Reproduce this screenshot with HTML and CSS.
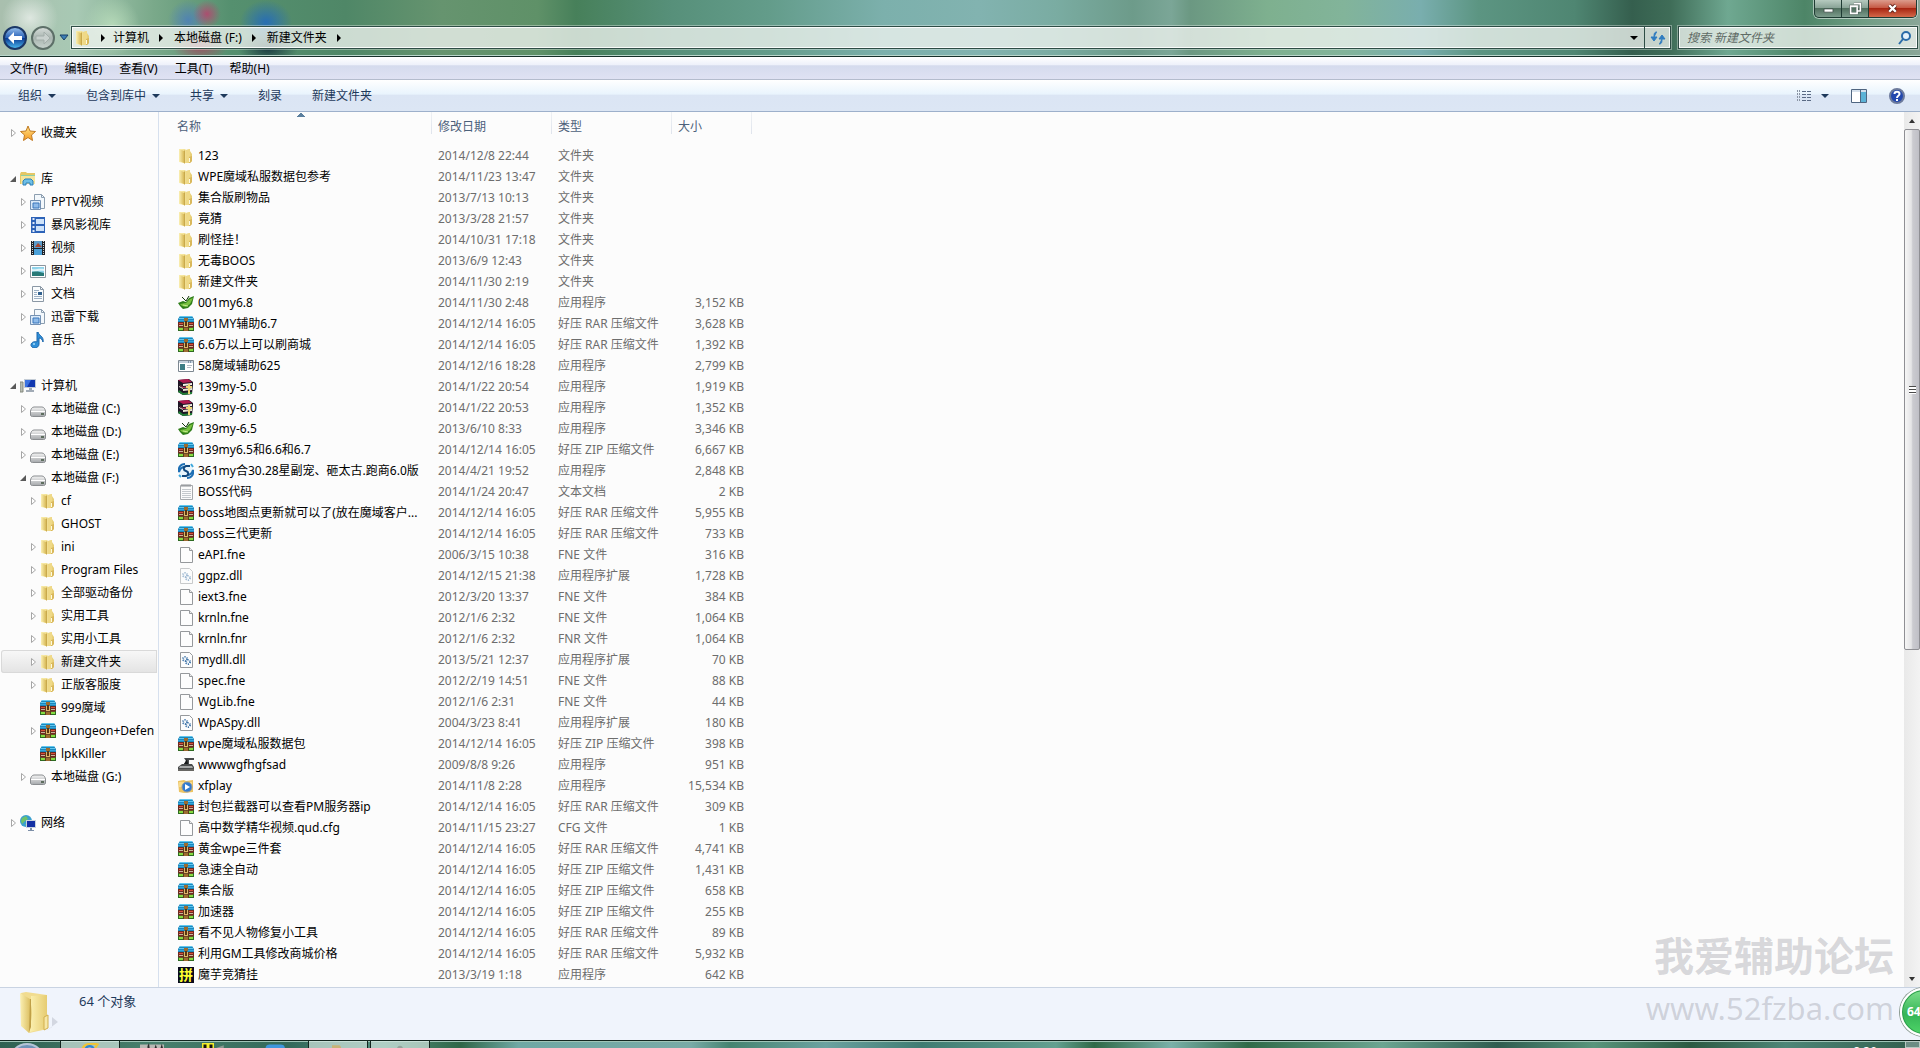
FILE: index.html
```html
<!DOCTYPE html>
<html lang="zh-CN">
<head>
    <meta charset="UTF-8">
    <meta name="viewport" content="width=device-width, initial-scale=1.0">
    <title>新建文件夹</title>
    <link rel="stylesheet" href="styles.css">
</head>
<body>
    <svg class="sprite" aria-hidden="true">
        <defs>
            <linearGradient id="gFlap" x1="0" x2="1" y1="0" y2="0"><stop offset="0" stop-color="#fbf0b4"/><stop offset="1" stop-color="#d8b957"/></linearGradient>
            <linearGradient id="gFront" x1="0" x2="1" y1="0" y2="0"><stop offset="0" stop-color="#fbf0b0"/><stop offset="1" stop-color="#e6cc72"/></linearGradient>
            <linearGradient id="gBlue" x1="0" x2="0" y1="0" y2="1"><stop offset="0" stop-color="#9cc4ee"/><stop offset=".48" stop-color="#2a62b8"/><stop offset=".52" stop-color="#0b3c94"/><stop offset="1" stop-color="#4fc0f4"/></linearGradient>
            <linearGradient id="gGrey" x1="0" x2="0" y1="0" y2="1"><stop offset="0" stop-color="#d8dedb"/><stop offset=".5" stop-color="#a9b5b0"/><stop offset="1" stop-color="#c9d4cf"/></linearGradient>
            <linearGradient id="gDrive" x1="0" x2="0" y1="0" y2="1"><stop offset="0" stop-color="#f4f4f4"/><stop offset="1" stop-color="#a5a8ab"/></linearGradient>
            <linearGradient id="gStar" x1="0" x2="0" y1="0" y2="1"><stop offset="0" stop-color="#ffe48a"/><stop offset="1" stop-color="#f59a23"/></linearGradient>
        </defs>
        <symbol id="i-folder" viewBox="0 0 16 16">
            <path d="M1 1h6l1 1 4-1v2l2 3v7l-2 2H6l-5-1z" fill="url(#gFront)"/>
            <path d="M1 1l5 2v12l-5-2z" fill="url(#gFlap)"/>
            <path d="M6 3l1-1v13l-1 1z" fill="#c9a94c"/>
            <path d="M8 2l4-1v13l-4 1z" fill="#efd987"/>
            <path d="M11 9l3-1v5l-2 2h-1z" fill="#d9b85c"/>
            <path d="M11.500 10v4" stroke="#fffbe0"/>
        </symbol>
        <symbol id="i-rar" viewBox="0 0 16 16">
            <path d="M2 0h12l2 3v3H0V3z" fill="#1c87bd"/>
            <path d="M2 .500h12M1 2.500h14" stroke="#5fc8f0"/>
            <path d="M0 4h16v1H0z" fill="#35a6da"/>
            <path d="M0 6h16v5H0z" fill="#6f2a20"/>
            <path d="M1 7.500h14" stroke="#d8523c"/>
            <path d="M1 9.500h14" stroke="#c9b59c"/>
            <path d="M0 11h16v4H0z" fill="#2e6a22"/>
            <path d="M1 11.500h14" stroke="#6d4a28"/>
            <path d="M1 13h14" stroke="#86dc42" stroke-width="2"/>
            <path d="M5.500 6v9M10.500 6v9" stroke="#5b3a1c"/>
            <path d="M6 2h4v3H6zM6 12h4v3H6z" fill="#9c6d30"/>
            <path d="M6 6h4v5H6z" fill="#e0b56a"/>
            <path d="M8 5v5" stroke="#5a3512" stroke-width="2"/>
        </symbol>
        <symbol id="i-books" viewBox="0 0 16 16">
            <path d="M0 1l11-1 4 3v3l-1 9-9 1-5-3z" fill="#1d1524"/>
            <path d="M0 1l10-1 4 3-9 1z" fill="#b0184e"/>
            <path d="M5 5l9-1v2l-9 1z" fill="#f4eee4"/>
            <path d="M1 5l4 3 9-1v1L5 9z" fill="#d9325f"/>
            <path d="M5 10l9-1v2l-9 1zM1 7l4 2v1L1 8z" fill="#e9e2d2"/>
            <path d="M1 11l4 3 9-1v2l-9 1-5-3z" fill="#1f7d35"/>
            <path d="M11 5v10M8 8h6" stroke="#f1d878" stroke-width="2"/>
        </symbol>
        <symbol id="i-leaf" viewBox="0 0 16 16">
            <path d="M0 8l5-2 3 1 3-4 5-2-2 8-4 4-5 1-3-3z" fill="#2f7d1a"/>
            <path d="M2 9l6-1 4-4 3-1-3 6-4 3-4-1z" fill="#79c040"/>
            <path d="M4 2l4 4 3-5" stroke="#16380c" fill="none"/>
            <path d="M5 10l5 1" stroke="#c3ec8e"/>
        </symbol>
        <symbol id="i-app" viewBox="0 0 16 16">
            <path d="M.500 2.500h15v11H.500z" fill="#fff" stroke="#7d8791"/>
            <path d="M1 3h14v2H1z" fill="#c3cfda"/>
            <path d="M10 4h1M12 4h1" stroke="#3b5878"/>
            <path d="M2 6h5v6H2z" fill="#3d7d84"/>
            <path d="M9 7.500h5M9 9.500h4" stroke="#b3bcc4"/>
        </symbol>
        <symbol id="i-swirl" viewBox="0 0 16 16">
            <circle cx="8" cy="8" r="7" fill="#e8f5fc"/>
            <path d="M7 1C2 1 0 5 1 9c1-4 3-5 6-5M9 15c5 0 7-4 6-8-1 4-3 5-6 5" fill="none" stroke="#1e6fb4" stroke-width="2"/>
            <path d="M12 3H8C5 4 5 7 8 8s3 4 0 5H4" fill="none" stroke="#12497f" stroke-width="2"/>
            <path d="M13 1l2 3M1 12l2 2" stroke="#3fa8dc" stroke-width="2"/>
        </symbol>
        <symbol id="i-text" viewBox="0 0 16 16">
            <path d="M2.500 1.500h12v14h-12z" fill="#fbfbfb" stroke="#a6a9ac"/>
            <path d="M4 0v3M6 0v3M8 0v3M10 0v3M12 0v3" stroke="#8d9094"/>
            <path d="M4 5.500h9M4 7.500h9M4 9.500h9M4 11.500h9M4 13.500h9" stroke="#c5c9cd"/>
        </symbol>
        <symbol id="i-file" viewBox="0 0 16 16">
            <path d="M2.500.500h9l3 3v12h-12z" fill="#fdfdfd" stroke="#96999c"/>
            <path d="M11.500.500v3h3" fill="#eee" stroke="#96999c"/>
        </symbol>
        <symbol id="i-dll" viewBox="0 0 16 16">
            <path d="M2.500.500h9l3 3v12h-12z" fill="#fdfdfd" stroke="#96999c"/>
            <circle cx="7" cy="7" r="2" fill="#fff" stroke="#3d73a8" stroke-width="2" stroke-dasharray="1 1"/>
            <circle cx="10" cy="10" r="2" fill="#fff" stroke="#3d73a8" stroke-width="2" stroke-dasharray="1 1"/>
        </symbol>
        <symbol id="i-spy" viewBox="0 0 16 16">
            <path d="M6 1h10v2h-5v4h3l2 3v4H0v-4l4-3h2l2-3z" fill="#4a4c4d"/>
            <path d="M2 9h12l1 2H1z" fill="#a6a8a8"/>
            <path d="M0 13h16" stroke="#85817a"/>
            <path d="M9 2L6 7h4z" fill="#17191a"/>
        </symbol>
        <symbol id="i-xf" viewBox="0 0 16 16">
            <path d="M0 3l6-1 2 1 7-1v12l-9 1-5-1z" fill="#ecc463"/>
            <path d="M1 4h13v5H1z" fill="#f7db8c"/>
            <circle cx="9" cy="9" r="5" fill="#2f7ad0" stroke="#8a96a4"/>
            <path d="M7 6l5 3-5 3z" fill="#fff"/>
        </symbol>
        <symbol id="i-pin" viewBox="0 0 16 16">
            <path d="M0 0h16v16H0z" fill="#0a0a1c"/>
            <text x="8" y="13" class="pin-text">拼</text>
        </symbol>
        <symbol id="i-star" viewBox="0 0 16 16">
            <path d="M8 1l2 5 5.500.500-4 3.500 1 5.500L8 12.500 3.500 15.500l1-5.500-4-3.500L6 6z" fill="url(#gStar)" stroke="#c07a24" stroke-linejoin="round"/>
        </symbol>
        <symbol id="i-lib" viewBox="0 0 16 16">
            <path d="M0 3l1-2h5l1 1h8v11H0z" fill="#e5c765"/>
            <path d="M1 4h14v2H1z" fill="#8fd0a4"/>
            <path d="M1 5h14v8H1z" fill="#f6e49a"/>
            <path d="M3 14v-4l2-2h6l2 2v4h-3v-2H6v2z" fill="#6fbfe6" stroke="#2d7fb8"/>
        </symbol>
        <symbol id="i-pages" viewBox="0 0 16 16">
            <path d="M4.500.500h7l3 3v11h-10z" fill="#f3f8fc" stroke="#8c9eb0"/>
            <path d="M11.500.500v3h3" fill="none" stroke="#8c9eb0"/>
            <path d="M.500 6.500h10v9H.500z" fill="#dcebf9" stroke="#7391b4"/>
            <path d="M3 9h6v5H3z" fill="#8fbbe9" stroke="#3b76bb"/>
        </symbol>
        <symbol id="i-film" viewBox="0 0 16 16">
            <path d="M1 0h14v16H1z" fill="#2d63b8"/>
            <path d="M6 2h8v5H6zM6 9h8v5H6z" fill="#cfe3fa"/>
            <path d="M3.500 1v14" stroke="#dfeafa" stroke-width="2" stroke-dasharray="2 2"/>
        </symbol>
        <symbol id="i-video" viewBox="0 0 16 16">
            <path d="M1 1h14v14H1z" fill="#1e2228"/>
            <path d="M4 1h8v7H4z" fill="#5c9bc9"/>
            <path d="M4 9h8v6H4z" fill="#4aa0d8"/>
            <path d="M5 7l3-4 4 4z" fill="#a9442f"/>
            <path d="M2.500 1v14M13.500 1v14" stroke="#cfd4d8" stroke-dasharray="1 1"/>
        </symbol>
        <symbol id="i-pic" viewBox="0 0 16 16">
            <path d="M.500 2.500h15v12H.500z" fill="#fff" stroke="#8c959d"/>
            <path d="M2 4h12v9H2z" fill="#8fd3ea"/>
            <path d="M2 9c4-2 8 0 12 1v3H2z" fill="#287a78"/>
            <path d="M2 6c4 1 6-1 12 0v2C9 7 6 9 2 8z" fill="#e1f5fa"/>
        </symbol>
        <symbol id="i-doc" viewBox="0 0 16 16">
            <path d="M2.500.500h8l3 3v12h-11z" fill="#fafcfd" stroke="#8b98a5"/>
            <path d="M10.500.500v3h3" fill="none" stroke="#8b98a5"/>
            <path d="M4 4.500h5M4 6.500h3M4 8.500h3M4 10.500h8M4 12.500h8" stroke="#9db0c4"/>
            <path d="M8 6h4v3H8z" fill="#31618f"/>
        </symbol>
        <symbol id="i-music" viewBox="0 0 16 16">
            <path d="M8 0c1 4 6 4 5 10-1-3-2-4-4-4v6c0 5-8 5-8 1 0-3 4-4 6-3V0z" fill="#2f8fd8" stroke="#1a66ac"/>
            <circle cx="4" cy="12" r="1" fill="#a6dcfa"/>
        </symbol>
        <symbol id="i-pc" viewBox="0 0 16 16">
            <path d="M0 4h3v10H0z" fill="#b7bcb2" stroke="#84897f"/>
            <path d="M4 1h12v9H4z" fill="#c4ccd6"/>
            <path d="M5 2h10v7H5z" fill="#1238b0"/>
            <path d="M5 2h6l-4 7H5z" fill="#3a72e0"/>
            <path d="M9 10h3v2h2v2H6v-2h3z" fill="#a1abb6"/>
        </symbol>
        <symbol id="i-drive" viewBox="0 0 16 16">
            <path d="M4 6h8c2 0 3 2 3.500 4v4c0 1-1 1.500-2 1.500h-11c-1 0-2-.500-2-1.500v-4C1 8 2 6 4 6z" fill="url(#gDrive)" stroke="#8a8d90"/>
            <path d="M1 10.500h14" stroke="#fff"/>
            <path d="M11 12h3v2h-3z" fill="#5d6d5e"/>
        </symbol>
        <symbol id="i-net" viewBox="0 0 16 16">
            <circle cx="6" cy="6" r="6" fill="#3aa0cf"/>
            <path d="M2 3l4-2 2 3-3 2-3 3-1-3zM5 9l3 0-1 3z" fill="#6fc26a"/>
            <path d="M6 5h10v8H6z" fill="#c8d2de"/>
            <path d="M7 6h8v6H7z" fill="#122fa4"/>
            <path d="M10 13h2v2h2v1H8v-1h2z" fill="#7d8fa8"/>
        </symbol>
        <symbol id="t-closed" viewBox="0 0 10 10"><path d="M1.500 1.500v7l4-3.500z" fill="#fff" stroke="#a6a6a6"/></symbol>
        <symbol id="t-open" viewBox="0 0 10 10"><path d="M6 2v6H0z" fill="#595959"/></symbol>
        <symbol id="t-right" viewBox="0 0 10 10"><path d="M3 1v8l4-4z" fill="#000"/></symbol>
        <symbol id="t-down" viewBox="0 0 8 8"><path d="M0 2h8L4 6z" fill="currentColor"/></symbol>
    </svg>

    <header class="titlebar">
        <div class="travel">
            <button class="round" aria-label="后退"><svg viewBox="0 0 24 24"><circle cx="12" cy="12" r="11" fill="url(#gBlue)" stroke="#1b3766" stroke-width="2"/><path d="M11 6l-6 6 6 6v-4h8v-4h-8z" fill="#fff"/></svg></button>
            <button class="round" aria-label="前进"><svg viewBox="0 0 24 24"><circle cx="12" cy="12" r="11" fill="url(#gGrey)" stroke="#5d6f68" stroke-width="2"/><path d="M13 6l6 6-6 6v-4H5v-4h8z" fill="#c9d1ce" stroke="#a3aeaa"/></svg></button>
            <button class="recent" aria-label="最近页面"><svg viewBox="0 0 10 8"><path d="M1 1h8L5 6z" fill="#3d7fb6" stroke="#173f68"/></svg></button>
        </div>
        <nav class="address" aria-label="地址">
            <svg class="icon"><use href="#i-folder"/></svg>
            <svg class="crumb-arrow"><use href="#t-right"/></svg>
            <a href="#">计算机</a>
            <svg class="crumb-arrow"><use href="#t-right"/></svg>
            <a href="#">本地磁盘 (F:)</a>
            <svg class="crumb-arrow"><use href="#t-right"/></svg>
            <a href="#">新建文件夹</a>
            <svg class="crumb-arrow"><use href="#t-right"/></svg>
            <button class="history" aria-label="历史"><svg class="caret"><use href="#t-down"/></svg></button>
            <button class="refresh" aria-label="刷新"><svg viewBox="0 0 16 16"><path d="M7 2C4 2 4 4 4 8M1 7l3 4 3-4zM9 14c3 0 3-2 3-6M9 9l3-4 3 4z" fill="#2f7cc0" stroke="#2f7cc0"/></svg></button>
        </nav>
        <div class="search">
            <input type="search" aria-label="搜索" placeholder="搜索 新建文件夹">
            <svg viewBox="0 0 16 16"><circle cx="9" cy="6" r="4" fill="#e5f2fb" stroke="#2b6ca8" stroke-width="2"/><path d="M6 9l-4 5" stroke="#2b6ca8" stroke-width="2"/></svg>
        </div>
        <div class="caption">
            <button aria-label="最小化"><svg viewBox="0 0 16 16"><path d="M2.500 8.500h11v4h-11z" fill="#fff" stroke="#41504b"/></svg></button>
            <button aria-label="还原"><svg viewBox="0 0 16 16"><path d="M6 2h8v9h-3M2 5h8v9H2z" fill="none" stroke="#41504b" stroke-width="3"/><path d="M6 2h8v9h-3M2 5h8v9H2z" fill="none" stroke="#fff" stroke-width="2"/></svg></button>
            <button class="close" aria-label="关闭"><svg viewBox="0 0 16 16"><path d="M4 4l8 8M12 4l-8 8" stroke="#5e2018" stroke-width="5"/><path d="M4 4l8 8M12 4l-8 8" stroke="#fff" stroke-width="3"/></svg></button>
        </div>
    </header>

    <nav class="menubar" aria-label="菜单">
        <button>文件(F)</button>
        <button>编辑(E)</button>
        <button>查看(V)</button>
        <button>工具(T)</button>
        <button>帮助(H)</button>
    </nav>

    <div class="toolbar">
        <button>组织 <svg class="caret"><use href="#t-down"/></svg></button>
        <button>包含到库中 <svg class="caret"><use href="#t-down"/></svg></button>
        <button>共享 <svg class="caret"><use href="#t-down"/></svg></button>
        <button>刻录</button>
        <button>新建文件夹</button>
        <div class="views">
            <button aria-label="更改视图">
                <svg class="icon" viewBox="0 0 16 16"><path d="M1.500 2v12M3.500 2v12" stroke="#8a94a3" stroke-dasharray="2 1"/><path d="M6 3.500h9M6 6.500h9M6 9.500h9M6 12.500h9" stroke="#5a6a84" stroke-dasharray="4 1"/></svg>
                <svg class="caret"><use href="#t-down"/></svg>
            </button>
            <button aria-label="显示预览窗格"><svg class="icon" viewBox="0 0 16 16"><path d="M.500 1.500h15v13H.500z" fill="#fff" stroke="#4f6580"/><path d="M1 2h14v2H1z" fill="#d5e0ec"/><path d="M10 4h5v10h-5z" fill="#5bb2d6"/><path d="M9.500 2v12" stroke="#4f6580"/></svg></button>
            <button aria-label="获取帮助"><svg class="icon" viewBox="0 0 16 16"><circle cx="8" cy="8" r="7" fill="#2348ae" stroke="#6c7a9c" stroke-width="2"/><path d="M5.500 6c0-3 5-3 5 0 0 2-2.500 1.500-2.500 4M8 11v2" fill="none" stroke="#fff" stroke-width="2"/></svg></button>
        </div>
    </div>

    <main class="panes">
        <nav class="tree" aria-label="导航窗格">
            <ul>
                <li><a href="#"><svg class="twisty"><use href="#t-closed"/></svg><svg class="icon"><use href="#i-star"/></svg>收藏夹</a></li>
            </ul>
            <ul>
                <li><a href="#"><svg class="twisty"><use href="#t-open"/></svg><svg class="icon"><use href="#i-lib"/></svg>库</a></li>
                <li class="sub"><a href="#"><svg class="twisty"><use href="#t-closed"/></svg><svg class="icon"><use href="#i-pages"/></svg>PPTV视频</a></li>
                <li class="sub"><a href="#"><svg class="twisty"><use href="#t-closed"/></svg><svg class="icon"><use href="#i-film"/></svg>暴风影视库</a></li>
                <li class="sub"><a href="#"><svg class="twisty"><use href="#t-closed"/></svg><svg class="icon"><use href="#i-video"/></svg>视频</a></li>
                <li class="sub"><a href="#"><svg class="twisty"><use href="#t-closed"/></svg><svg class="icon"><use href="#i-pic"/></svg>图片</a></li>
                <li class="sub"><a href="#"><svg class="twisty"><use href="#t-closed"/></svg><svg class="icon"><use href="#i-doc"/></svg>文档</a></li>
                <li class="sub"><a href="#"><svg class="twisty"><use href="#t-closed"/></svg><svg class="icon"><use href="#i-pages"/></svg>迅雷下载</a></li>
                <li class="sub"><a href="#"><svg class="twisty"><use href="#t-closed"/></svg><svg class="icon"><use href="#i-music"/></svg>音乐</a></li>
            </ul>
            <ul>
                <li><a href="#"><svg class="twisty"><use href="#t-open"/></svg><svg class="icon"><use href="#i-pc"/></svg>计算机</a></li>
                <li class="sub"><a href="#"><svg class="twisty"><use href="#t-closed"/></svg><svg class="icon"><use href="#i-drive"/></svg>本地磁盘 (C:)</a></li>
                <li class="sub"><a href="#"><svg class="twisty"><use href="#t-closed"/></svg><svg class="icon"><use href="#i-drive"/></svg>本地磁盘 (D:)</a></li>
                <li class="sub"><a href="#"><svg class="twisty"><use href="#t-closed"/></svg><svg class="icon"><use href="#i-drive"/></svg>本地磁盘 (E:)</a></li>
                <li class="sub"><a href="#"><svg class="twisty"><use href="#t-open"/></svg><svg class="icon"><use href="#i-drive"/></svg>本地磁盘 (F:)</a></li>
                <li class="leaf"><a href="#"><svg class="twisty"><use href="#t-closed"/></svg><svg class="icon"><use href="#i-folder"/></svg>cf</a></li>
                <li class="leaf"><a href="#"><svg class="twisty"></svg><svg class="icon"><use href="#i-folder"/></svg>GHOST</a></li>
                <li class="leaf"><a href="#"><svg class="twisty"><use href="#t-closed"/></svg><svg class="icon"><use href="#i-folder"/></svg>ini</a></li>
                <li class="leaf"><a href="#"><svg class="twisty"><use href="#t-closed"/></svg><svg class="icon"><use href="#i-folder"/></svg>Program Files</a></li>
                <li class="leaf"><a href="#"><svg class="twisty"><use href="#t-closed"/></svg><svg class="icon"><use href="#i-folder"/></svg>全部驱动备份</a></li>
                <li class="leaf"><a href="#"><svg class="twisty"><use href="#t-closed"/></svg><svg class="icon"><use href="#i-folder"/></svg>实用工具</a></li>
                <li class="leaf"><a href="#"><svg class="twisty"><use href="#t-closed"/></svg><svg class="icon"><use href="#i-folder"/></svg>实用小工具</a></li>
                <li class="leaf"><a href="#" class="selected"><svg class="twisty"><use href="#t-closed"/></svg><svg class="icon"><use href="#i-folder"/></svg>新建文件夹</a></li>
                <li class="leaf"><a href="#"><svg class="twisty"><use href="#t-closed"/></svg><svg class="icon"><use href="#i-folder"/></svg>正版客服度</a></li>
                <li class="leaf"><a href="#"><svg class="twisty"></svg><svg class="icon"><use href="#i-rar"/></svg>999魔域</a></li>
                <li class="leaf"><a href="#"><svg class="twisty"><use href="#t-closed"/></svg><svg class="icon"><use href="#i-rar"/></svg>Dungeon+Defen</a></li>
                <li class="leaf"><a href="#"><svg class="twisty"></svg><svg class="icon"><use href="#i-rar"/></svg>lpkKiller</a></li>
                <li class="sub"><a href="#"><svg class="twisty"><use href="#t-closed"/></svg><svg class="icon"><use href="#i-drive"/></svg>本地磁盘 (G:)</a></li>
            </ul>
            <ul>
                <li><a href="#"><svg class="twisty"><use href="#t-closed"/></svg><svg class="icon"><use href="#i-net"/></svg>网络</a></li>
            </ul>
        </nav>

        <section class="files">
            <table>
                <colgroup><col class="c-name"><col class="c-date"><col class="c-type"><col class="c-size"></colgroup>
                <thead>
                    <tr><th class="sorted">名称</th><th>修改日期</th><th>类型</th><th>大小</th></tr>
                </thead>
                <tbody>
                    <tr><td><svg class="icon"><use href="#i-folder"/></svg>123</td><td>2014/12/8 22:44</td><td>文件夹</td><td></td></tr>
                    <tr><td><svg class="icon"><use href="#i-folder"/></svg>WPE魔域私服数据包参考</td><td>2014/11/23 13:47</td><td>文件夹</td><td></td></tr>
                    <tr><td><svg class="icon"><use href="#i-folder"/></svg>集合版刷物品</td><td>2013/7/13 10:13</td><td>文件夹</td><td></td></tr>
                    <tr><td><svg class="icon"><use href="#i-folder"/></svg>竟猜</td><td>2013/3/28 21:57</td><td>文件夹</td><td></td></tr>
                    <tr><td><svg class="icon"><use href="#i-folder"/></svg>刷怪挂！</td><td>2014/10/31 17:18</td><td>文件夹</td><td></td></tr>
                    <tr><td><svg class="icon"><use href="#i-folder"/></svg>无毒BOOS</td><td>2013/6/9 12:43</td><td>文件夹</td><td></td></tr>
                    <tr><td><svg class="icon"><use href="#i-folder"/></svg>新建文件夹</td><td>2014/11/30 2:19</td><td>文件夹</td><td></td></tr>
                    <tr><td><svg class="icon"><use href="#i-leaf"/></svg>001my6.8</td><td>2014/11/30 2:48</td><td>应用程序</td><td>3,152 KB</td></tr>
                    <tr><td><svg class="icon"><use href="#i-rar"/></svg>001MY辅助6.7</td><td>2014/12/14 16:05</td><td>好压 RAR 压缩文件</td><td>3,628 KB</td></tr>
                    <tr><td><svg class="icon"><use href="#i-rar"/></svg>6.6万以上可以刷商城</td><td>2014/12/14 16:05</td><td>好压 RAR 压缩文件</td><td>1,392 KB</td></tr>
                    <tr><td><svg class="icon"><use href="#i-app"/></svg>58魔域辅助625</td><td>2014/12/16 18:28</td><td>应用程序</td><td>2,799 KB</td></tr>
                    <tr><td><svg class="icon"><use href="#i-books"/></svg>139my-5.0</td><td>2014/1/22 20:54</td><td>应用程序</td><td>1,919 KB</td></tr>
                    <tr><td><svg class="icon"><use href="#i-books"/></svg>139my-6.0</td><td>2014/1/22 20:53</td><td>应用程序</td><td>1,352 KB</td></tr>
                    <tr><td><svg class="icon"><use href="#i-leaf"/></svg>139my-6.5</td><td>2013/6/10 8:33</td><td>应用程序</td><td>3,346 KB</td></tr>
                    <tr><td><svg class="icon"><use href="#i-rar"/></svg>139my6.5和6.6和6.7</td><td>2014/12/14 16:05</td><td>好压 ZIP 压缩文件</td><td>6,667 KB</td></tr>
                    <tr><td><svg class="icon"><use href="#i-swirl"/></svg>361my合30.28星副宠、砸太古.跑商6.0版</td><td>2014/4/21 19:52</td><td>应用程序</td><td>2,848 KB</td></tr>
                    <tr><td><svg class="icon"><use href="#i-text"/></svg>BOSS代码</td><td>2014/1/24 20:47</td><td>文本文档</td><td>2 KB</td></tr>
                    <tr><td><svg class="icon"><use href="#i-rar"/></svg>boss地图点更新就可以了(放在魔域客户...</td><td>2014/12/14 16:05</td><td>好压 RAR 压缩文件</td><td>5,955 KB</td></tr>
                    <tr><td><svg class="icon"><use href="#i-rar"/></svg>boss三代更新</td><td>2014/12/14 16:05</td><td>好压 RAR 压缩文件</td><td>733 KB</td></tr>
                    <tr><td><svg class="icon"><use href="#i-file"/></svg>eAPI.fne</td><td>2006/3/15 10:38</td><td>FNE 文件</td><td>316 KB</td></tr>
                    <tr><td><svg class="icon hidden-file"><use href="#i-dll"/></svg>ggpz.dll</td><td>2014/12/15 21:38</td><td>应用程序扩展</td><td>1,728 KB</td></tr>
                    <tr><td><svg class="icon"><use href="#i-file"/></svg>iext3.fne</td><td>2012/3/20 13:37</td><td>FNE 文件</td><td>384 KB</td></tr>
                    <tr><td><svg class="icon"><use href="#i-file"/></svg>krnln.fne</td><td>2012/1/6 2:32</td><td>FNE 文件</td><td>1,064 KB</td></tr>
                    <tr><td><svg class="icon"><use href="#i-file"/></svg>krnln.fnr</td><td>2012/1/6 2:32</td><td>FNR 文件</td><td>1,064 KB</td></tr>
                    <tr><td><svg class="icon"><use href="#i-dll"/></svg>mydll.dll</td><td>2013/5/21 12:37</td><td>应用程序扩展</td><td>70 KB</td></tr>
                    <tr><td><svg class="icon"><use href="#i-file"/></svg>spec.fne</td><td>2012/2/19 14:51</td><td>FNE 文件</td><td>88 KB</td></tr>
                    <tr><td><svg class="icon"><use href="#i-file"/></svg>WgLib.fne</td><td>2012/1/6 2:31</td><td>FNE 文件</td><td>44 KB</td></tr>
                    <tr><td><svg class="icon"><use href="#i-dll"/></svg>WpASpy.dll</td><td>2004/3/23 8:41</td><td>应用程序扩展</td><td>180 KB</td></tr>
                    <tr><td><svg class="icon"><use href="#i-rar"/></svg>wpe魔域私服数据包</td><td>2014/12/14 16:05</td><td>好压 ZIP 压缩文件</td><td>398 KB</td></tr>
                    <tr><td><svg class="icon"><use href="#i-spy"/></svg>wwwwgfhgfsad</td><td>2009/8/8 9:26</td><td>应用程序</td><td>951 KB</td></tr>
                    <tr><td><svg class="icon"><use href="#i-xf"/></svg>xfplay</td><td>2014/11/8 2:28</td><td>应用程序</td><td>15,534 KB</td></tr>
                    <tr><td><svg class="icon"><use href="#i-rar"/></svg>封包拦截器可以查看PM服务器ip</td><td>2014/12/14 16:05</td><td>好压 RAR 压缩文件</td><td>309 KB</td></tr>
                    <tr><td><svg class="icon"><use href="#i-file"/></svg>高中数学精华视频.qud.cfg</td><td>2014/11/15 23:27</td><td>CFG 文件</td><td>1 KB</td></tr>
                    <tr><td><svg class="icon"><use href="#i-rar"/></svg>黄金wpe三件套</td><td>2014/12/14 16:05</td><td>好压 RAR 压缩文件</td><td>4,741 KB</td></tr>
                    <tr><td><svg class="icon"><use href="#i-rar"/></svg>急速全自动</td><td>2014/12/14 16:05</td><td>好压 ZIP 压缩文件</td><td>1,431 KB</td></tr>
                    <tr><td><svg class="icon"><use href="#i-rar"/></svg>集合版</td><td>2014/12/14 16:05</td><td>好压 ZIP 压缩文件</td><td>658 KB</td></tr>
                    <tr><td><svg class="icon"><use href="#i-rar"/></svg>加速器</td><td>2014/12/14 16:05</td><td>好压 ZIP 压缩文件</td><td>255 KB</td></tr>
                    <tr><td><svg class="icon"><use href="#i-rar"/></svg>看不见人物修复小工具</td><td>2014/12/14 16:05</td><td>好压 RAR 压缩文件</td><td>89 KB</td></tr>
                    <tr><td><svg class="icon"><use href="#i-rar"/></svg>利用GM工具修改商城价格</td><td>2014/12/14 16:05</td><td>好压 RAR 压缩文件</td><td>5,932 KB</td></tr>
                    <tr><td><svg class="icon"><use href="#i-pin"/></svg>魔芋竞猜挂</td><td>2013/3/19 1:18</td><td>应用程序</td><td>642 KB</td></tr>
                </tbody>
            </table>
        </section>

        <div class="scrollbar">
            <button aria-label="向上滚动"><svg viewBox="0 0 8 8"><path d="M1 6h6L4 2z" fill="#333"/></svg></button>
            <div class="track"><div class="thumb"><span class="grip"></span></div></div>
            <button aria-label="向下滚动"><svg viewBox="0 0 8 8"><path d="M1 2h6L4 6z" fill="#333"/></svg></button>
        </div>
    </main>

    <footer class="details">
        <svg viewBox="0 0 40 44">
            <path d="M26 40l12-9-6-5v10z" fill="#d3d7e1"/>
            <path d="M1 2l5-1 21 3v33l-4 2-14 3z" fill="#f1dc90"/>
            <path d="M11 5l16-1v33l-17 4z" fill="url(#gFront)"/>
            <path d="M0 2l10 6c2 8 2 20 0 28l-1 6-8-7z" fill="url(#gFlap)"/>
            <path d="M10 8l1 0v28l-2 5z" fill="#c0a048"/>
            <path d="M24 26l4-2v13l-4 2z" fill="#f6e7a6" stroke="#d3b04e"/>
        </svg>
        <span>64 个对象</span>
    </footer>

    <div class="taskbar">
        <div class="orb"></div>
        <div class="task active"><svg viewBox="0 0 24 8"><path d="M2 8c2-8 14-8 20-6l-4 6" fill="none" stroke="#f0c534" stroke-width="3"/><path d="M6 8c2-5 9-5 11 0" fill="none" stroke="#2f86d6" stroke-width="3"/></svg></div>
        <div class="task"><svg viewBox="0 0 32 8"><path d="M0 2h32v6H0z" fill="#b9b9b4"/><path d="M10 8V4l2-4 1 8M19 8l2-6 2 6M27 8l2-7 2 7" fill="#2c2c2c"/></svg></div>
        <div class="task"><svg viewBox="0 0 32 8"><path d="M1 1h6v7H1zM9 1h6v7H9z" fill="#111" stroke="#f2ee2a" stroke-width="2"/><path d="M15 8l14-5v5z" fill="#8b9a92"/></svg></div>
        <div class="task"><svg viewBox="0 0 32 8"><path d="M2 8c0-5 3-6 6-6h14c4 0 6 2 6 6z" fill="#3f97de"/></svg></div>
        <div class="task active"><svg viewBox="0 0 24 8"><path d="M4 8V3h10l2 2v3z" fill="#c9b376"/></svg></div>
        <div class="task active"><svg viewBox="0 0 24 8"><path d="M8 8c0-6 8-6 8 0z" fill="#92a59c"/></svg></div>
        <time>8:30</time>
        <div class="peek"></div>
    </div>

    <div class="watermark">
        <strong>我爱辅助论坛</strong>
        <span>www.52fzba.com</span>
    </div>
    <div class="ball">64</div>
</body>
</html>
```

FILE: styles.css
```css
* {
    box-sizing: border-box;
}
html, body {
    height: 100%;
}
body {
    position: relative;
    display: flex;
    flex-direction: column;
    margin: 0;
    overflow: hidden;
    background: #fcfcfc;
    color: #000;
    font: 12px/20px "Noto Sans", "Noto Sans CJK SC", sans-serif;
}
button {
    display: flex;
    align-items: center;
    padding: 0;
    border: 0;
    background: none;
    color: inherit;
    font: inherit;
}
a {
    color: inherit;
    text-decoration: none;
}
.sprite {
    position: absolute;
    width: 0;
    height: 0;
}
.icon {
    flex: none;
    width: 16px;
    height: 16px;
}
.caret {
    width: 8px;
    height: 8px;
}
.pin-text {
    fill: #ffff30;
    font: bold 14px "Noto Sans CJK SC", sans-serif;
    text-anchor: middle;
}

/* glass title bar */
.titlebar {
    position: relative;
    flex: none;
    display: flex;
    align-items: flex-start;
    height: 57px;
    padding: 26px 2px 0 3px;
    border-bottom: 1px solid #16302a;
    box-shadow: inset 0 -1px #b9d6cb;
    background:
        radial-gradient(ellipse 28px 26px at 30px 18px, rgba(235, 240, 236, .8), transparent),
        radial-gradient(ellipse 28px 30px at 112px 26px, rgba(190, 225, 190, .8), transparent),
        radial-gradient(circle 14px at 207px 14px, rgba(190, 60, 110, .8), transparent),
        radial-gradient(circle 20px at 188px 20px, rgba(70, 120, 200, .7), transparent),
        radial-gradient(ellipse 28px 16px at 200px 46px, rgba(170, 60, 90, .8), transparent),
        radial-gradient(ellipse 26px 22px at 266px 22px, rgba(40, 110, 180, 1), transparent),
        radial-gradient(ellipse 30px 18px at 268px 48px, rgba(20, 50, 60, .9), transparent),
        linear-gradient(90deg, #a9bfae 0, #a8c9b4 4%, #7aa98a 8%, #55906f 12%, #4f8767 18%, #66946f 23%, #5f9168 28%, #47805a 30%, #57907a 35%, #639c8a 40%, #7cb0ac 46%, #82b3b0 51%, #7aaca2 55%, #6d9b8a 59%, #7ba697 61%, #6b9882 62%, #7eb08f 66%, #82b49a 70%, #79aeae 74%, #5c9582 77%, #4f8672 82%, #355f4e 85%, #3f6d58 87%, #6fa891 90%, #4d8567 94%, #709d84 97%, #8aa698 100%);
}
.travel {
    display: flex;
    align-items: center;
    gap: 4px;
    width: 68px;
}
.round, .round svg {
    width: 24px;
    height: 24px;
}
.recent svg {
    width: 10px;
    height: 8px;
}
.address, .search {
    display: flex;
    align-items: center;
    height: 23px;
    border: 1px solid #2e4d45;
    box-shadow: inset 0 0 0 1px rgba(255, 255, 255, .85), 0 0 0 1px rgba(255, 255, 255, .35);
    background: rgba(240, 243, 240, .78);
}
.address {
    flex: 1;
    margin-right: 7px;
    padding-left: 3px;
}
.crumb-arrow {
    width: 10px;
    height: 10px;
    margin: 0 8px 0 7px;
}
.icon + .crumb-arrow {
    margin-right: 5px;
}
.history {
    margin-left: auto;
    padding: 0 6px;
}
.refresh {
    justify-content: center;
    width: 26px;
    height: 21px;
    border-left: 1px solid #2e4d45;
}
.refresh svg {
    width: 16px;
    height: 16px;
}
.search {
    width: 240px;
    padding: 0 4px 0 8px;
}
.search input {
    flex: 1;
    min-width: 0;
    padding: 0;
    border: 0;
    outline: 0;
    background: none;
    font: italic 12px/20px "Noto Sans", "Noto Sans CJK SC", sans-serif;
}
.search input::placeholder {
    color: #5f6b66;
}
.search svg {
    width: 16px;
    height: 16px;
}
.caption {
    position: absolute;
    top: 0;
    right: 3px;
    display: flex;
    height: 18px;
    border: 1px solid #1f3b33;
    border-top: 0;
    border-radius: 0 0 5px 5px;
    box-shadow: 0 0 0 1px rgba(255, 255, 255, .5);
    background: linear-gradient(#b6cabf, #8aa497 45%, #51705f 50%, #7c9c8c);
    overflow: hidden;
}
.caption button {
    justify-content: center;
    width: 27px;
    border-right: 1px solid #1f3b33;
}
.caption .close {
    width: 47px;
    border: 0;
    background: linear-gradient(#dc9c8c, #c65a45 45%, #a82612 50%, #d4684a);
}
.caption svg {
    width: 13px;
    height: 13px;
}

.menubar {
    flex: none;
    display: flex;
    gap: 17px;
    height: 23px;
    padding: 2px 10px 0;
    border-bottom: 1px solid #b4bccd;
    background: linear-gradient(#fff, #eef1fa 35%, #d5dbed 40%, #dfe2f3);
}
.toolbar {
    flex: none;
    display: flex;
    gap: 30px;
    height: 32px;
    padding: 0 15px 0 18px;
    border-bottom: 1px solid #9db0cb;
    background: linear-gradient(#fff, #e9f4fd 45%, #dbe5f4 50%, #dce6f4);
    color: #1e395b;
}
.toolbar button {
    gap: 6px;
}
.views {
    display: flex;
    gap: 22px;
    margin-left: auto;
}
.views button {
    gap: 9px;
}

.panes {
    flex: 1;
    display: flex;
    min-height: 0;
}

/* navigation tree */
.tree {
    flex: none;
    width: 159px;
    padding: 9px 1px 0 1px;
    border-right: 1px solid #d6e0ee;
    overflow: hidden;
}
.tree ul {
    margin: 0 0 23px;
    padding: 0;
    list-style: none;
}
.tree a {
    display: flex;
    align-items: center;
    height: 23px;
    padding-left: 9px;
    white-space: nowrap;
    overflow: hidden;
}
.tree .sub a {
    padding-left: 19px;
}
.tree .leaf a {
    padding-left: 29px;
}
.tree .selected {
    border-radius: 3px 0 0 3px;
    box-shadow: inset 0 0 0 1px #d9d9d9;
    background: linear-gradient(#f8f8f8, #e3e3e3);
}
.tree .icon {
    margin-right: 5px;
}
.twisty {
    flex: none;
    width: 10px;
    height: 10px;
}

/* file list */
.files {
    flex: 1;
    min-width: 0;
    overflow: hidden;
}
.files table {
    width: 593px;
    table-layout: fixed;
    border-collapse: collapse;
}
.c-name {
    width: 273px;
}
.c-date, .c-type {
    width: 120px;
}
.c-size {
    width: 80px;
}
.files th {
    height: 33px;
    padding: 5px 0 8px 6px;
    background: linear-gradient(#eef0f4, #dfe4ec) no-repeat right top / 1px 22px;
    color: #4c607a;
    font-weight: normal;
    text-align: left;
}
.files th:first-child {
    padding-left: 18px;
}
.files .sorted {
    background:
        linear-gradient(to bottom right, transparent 50%, #5b7f9e 50%) no-repeat 138px 1px / 4px 4px,
        linear-gradient(to bottom left, transparent 50%, #5b7f9e 50%) no-repeat 142px 1px / 4px 4px,
        linear-gradient(#eef0f4, #dfe4ec) no-repeat right top / 1px 22px;
}
.files td {
    height: 21px;
    padding: 0 0 0 6px;
    color: #6d6d6d;
    line-height: 21px;
    white-space: nowrap;
}
.files td:first-child {
    display: flex;
    align-items: center;
    gap: 4px;
    padding-left: 19px;
    color: #000;
}
.files td:last-child {
    padding-right: 8px;
    text-align: right;
}
.hidden-file {
    opacity: .5;
}

.scrollbar {
    display: flex;
    flex-direction: column;
    width: 16px;
    background: linear-gradient(90deg, #e9e9e9, #f3f3f3);
}
.scrollbar button {
    justify-content: center;
    height: 17px;
}
.scrollbar svg {
    width: 8px;
    height: 8px;
}
.track {
    flex: 1;
}
.thumb {
    display: flex;
    align-items: center;
    justify-content: center;
    height: 62%;
    border: 1px solid #8f8f94;
    border-radius: 2px;
    background: linear-gradient(90deg, #f6f6f6, #e4e4e6 45%, #cbcbd0 55%, #bfbfc6);
}
.grip {
    width: 7px;
    height: 8px;
    background: repeating-linear-gradient(#4a4a4a 0 1px, #fff 1px 3px);
}

.details {
    flex: none;
    display: flex;
    gap: 19px;
    height: 53px;
    padding: 3px 20px;
    border-top: 1px solid #c9d3e2;
    background: #f0f4fc;
    color: #1e395b;
    font-size: 13px;
}
.details svg {
    width: 40px;
    height: 44px;
}

.taskbar {
    flex: none;
    display: flex;
    gap: 2px;
    height: 8px;
    border-top: 1px solid #12261f;
    box-shadow: inset 0 1px #9fc5b7;
    background: linear-gradient(90deg, #2f6152 0, #48806d 8%, #33695a 15%, #55907f 20%, #2f6748 24%, #6fa8a4 27%, #78aaa6 36%, #468471 38%, #6ba2a0 43%, #3f7c72 48%, #63a090 55%, #2f6a48 57%, #79b0a8 61%, #2f6a48 65%, #6ba591 72%, #2f5d50 78%, #59957c 83%, #2b5b43 88%, #4d8677 93%, #315e4c 100%);
    overflow: hidden;
}
.orb {
    width: 36px;
    height: 36px;
    margin: 2px 13px 0 9px;
    border: 2px solid #b5c5d6;
    border-radius: 50%;
    background: #6f93b8;
}
.task {
    display: flex;
    justify-content: center;
    width: 60px;
    padding-top: 2px;
}
.task.active {
    border: 1px solid #12261f;
    border-width: 0 1px;
    background: rgba(225, 240, 233, .65);
}
.task svg {
    height: 6px;
}
.taskbar time {
    margin-left: auto;
    padding-top: 1px;
    color: #fff;
}
.peek {
    width: 15px;
    margin-left: 26px;
    border: 1px solid #b7c9c2;
    background: #6c8d84;
}

.watermark {
    position: absolute;
    right: 26px;
    bottom: 16px;
    display: flex;
    flex-direction: column;
    align-items: flex-end;
    color: rgba(110, 110, 120, .26);
    pointer-events: none;
}
.watermark strong {
    font-size: 40px;
    line-height: 56px;
}
.watermark span {
    font-size: 31px;
    line-height: 48px;
}
.ball {
    position: absolute;
    right: -28px;
    bottom: 12px;
    width: 48px;
    height: 48px;
    padding-left: 5px;
    border: 2px solid #fff;
    border-radius: 50%;
    box-shadow: 0 0 0 1px #8b9b91, inset 0 0 0 1px #2e9c4d;
    background: linear-gradient(#7fe08d, #35b556 55%, #4fd468);
    color: #fff;
    font-weight: bold;
    line-height: 44px;
}
```
